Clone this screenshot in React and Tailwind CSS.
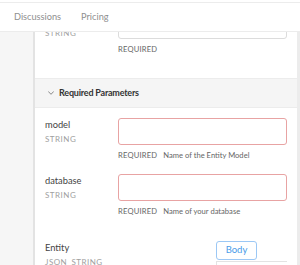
import React from 'react';

const Chevron = () => (
	<svg width="6" height="4" viewBox="0 0 6 4" fill="none" stroke="#8a8a8a" strokeWidth="1" strokeLinecap="round" strokeLinejoin="round">
		<polyline points="0.5,0.7 3,3.3 5.5,0.7" />
	</svg>
);

const ParamRow = ({ name, type, note, invalid, className = '' }) => {
	return (
		<div className={'flex pt-[10px] pb-[2px] pr-[10px] ' + className}>
			<div className="w-[83px] pl-[10px] shrink-0">
				<div className="h-[14px] text-[9.3px] leading-[14px] text-[#444]">{name}</div>
				<div className="mt-[1px] text-[8px] leading-[12px] tracking-[0.5px] text-[#a0a0a0]">{type}</div>
			</div>
			<div className="flex-1">
				<div
					className={
						'h-[27px] rounded-[3px] border bg-white ' +
						(invalid ? 'border-[#e8a3a3]' : 'border-[#dcdcdc]')
					}
				></div>
				<div className="mt-[4px] flex gap-[6px] text-[7.6px] leading-[13px] text-[#666]">
					<span className="tracking-[0.2px]">REQUIRED</span>
					{note && <span>{note}</span>}
				</div>
			</div>
		</div>
	);
};

export default function App() {
	return (
		<div className="w-[300px] h-[265px] overflow-hidden bg-white flex flex-col" style={{ fontFamily: 'Lato, "Noto Sans", sans-serif' }}>
			<div className="mt-[2px] h-[30px] shrink-0 border-t border-b border-[#ececec] bg-white flex items-center gap-[20px] pl-[14px] text-[9.2px] text-[#8f8f8f]">
				<span>Discussions</span>
				<span>Pricing</span>
			</div>
			<div className="flex flex-1 min-h-0">
				<div className="w-[33px] shrink-0 bg-[#f6f6f6]"></div>
				<div className="w-[2px] shrink-0 bg-[#e3e3e3]"></div>
				<div className="flex-1 bg-white overflow-hidden">
					{/* previous row, scrolled mostly out of view under the header */}
					<div className="-mt-[30px]">
						<ParamRow name="" type="STRING" className="mb-[20px]" />
					</div>
					<div className="h-[30px] bg-[#f5f5f5] border-t border-b border-[#ececec] flex items-center gap-[5px] pl-[13px]">
						<Chevron />
						<span className="text-[9px] tracking-[-0.2px] font-bold text-[#333]">Required Parameters</span>
					</div>
					<ParamRow name="model" type="STRING" note="Name of the Entity Model" invalid />
					<ParamRow name="database" type="STRING" note="Name of your database" invalid />
					<div className="flex pt-[21px] pr-[10px]">
						<div className="w-[83px] pl-[10px] shrink-0">
							<div className="text-[9.3px] leading-[14px] text-[#444]">Entity</div>
							<div className="mt-[1px] text-[8px] leading-[12px] tracking-[0.5px] text-[#a0a0a0]">JSON_STRING</div>
						</div>
						<div className="flex-1">
							<div className="ml-[98px] w-[41px] h-[19px] rounded-[3px] border border-[#9cc8f5] flex items-center justify-center text-[9.5px] text-[#4a9be8]">
								Body
							</div>
							<div className="ml-[98px] mt-[1px] h-[10px] border-t border-l border-[#e3e3e3]"></div>
						</div>
					</div>
				</div>
				<div className="w-[3px] shrink-0 bg-[#ececec]"></div>
			</div>
		</div>
	);
}
